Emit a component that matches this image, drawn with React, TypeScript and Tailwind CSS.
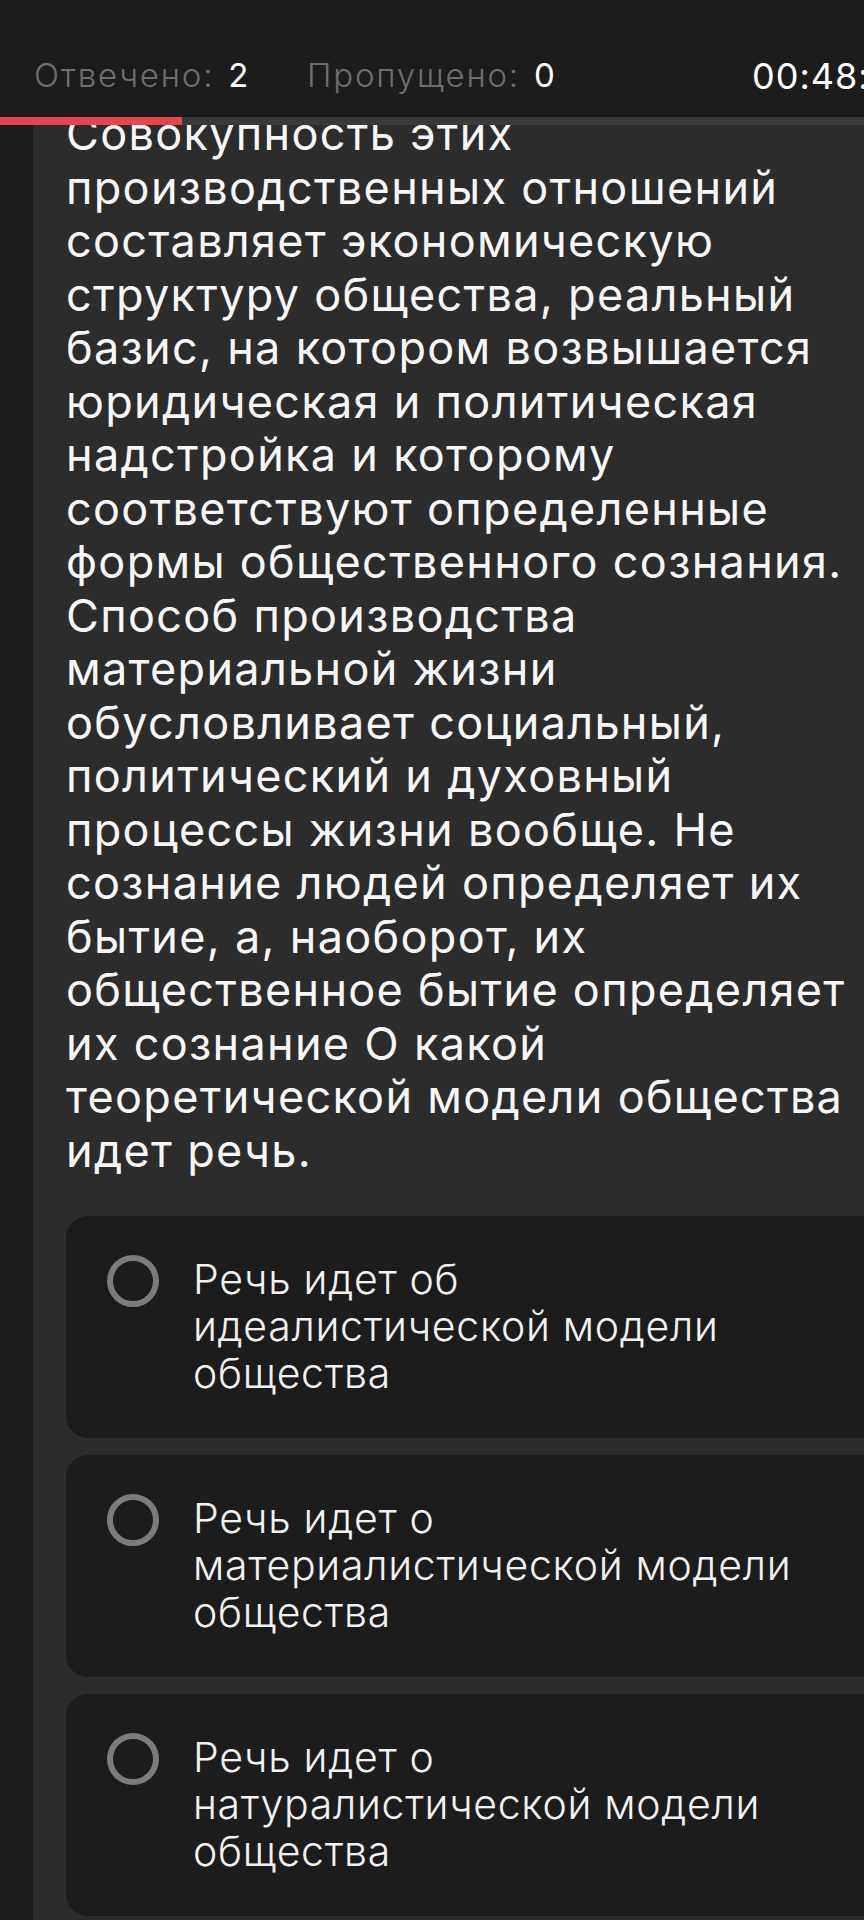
import React from "react";

const questionLines = [
  "Совокупность этих",
  "производственных отношений",
  "составляет экономическую",
  "структуру общества, реальный",
  "базис, на котором возвышается",
  "юридическая и политическая",
  "надстройка и которому",
  "соответствуют определенные",
  "формы общественного сознания.",
  "Способ производства",
  "материальной жизни",
  "обусловливает социальный,",
  "политический и духовный",
  "процессы жизни вообще. Не",
  "сознание людей определяет их",
  "бытие, а, наоборот, их",
  "общественное бытие определяет",
  "их сознание О какой",
  "теоретической модели общества",
  "идет речь.",
];

const answers = [
  ["Речь идет об", "идеалистической модели", "общества"],
  ["Речь идет о", "материалистической модели", "общества"],
  ["Речь идет о", "натуралистической модели", "общества"],
];

function Radio() {
  return (
    <span className="mt-[39px] block size-[52px] shrink-0 rounded-full border-[6px] border-[#7c7c7c]" />
  );
}

export default function App() {
  return (
    <div
      className="flex h-[1920px] w-[864px] flex-col overflow-hidden bg-[#1c1c1c] text-white"
      style={{ fontFamily: "Inter, 'Noto Sans', sans-serif" }}
    >
      {/* шапка со счётчиками */}
      <div className="flex h-[117px] shrink-0 items-center overflow-hidden whitespace-nowrap pl-[34px] pt-[34px]">
        <div className="flex w-[273px] shrink-0 items-baseline gap-[14px] text-[33px] tracking-[1.8px]">
          <span className="font-light text-[#6e6e6e]">Отвечено:</span>
          <span className="text-white">2</span>
        </div>
        <div className="flex w-[445px] shrink-0 items-baseline gap-[14px] text-[33px] tracking-[1.8px]">
          <span className="font-light text-[#6e6e6e]">Пропущено:</span>
          <span className="text-white">0</span>
        </div>
        <span className="shrink-0 text-[36px] tracking-[1px] text-white">00:48:55</span>
      </div>

      {/* прогресс */}
      <div className="h-[8px] shrink-0 bg-[#3a3a3a]">
        <div className="h-full w-[182px] bg-[#ea434b]" />
      </div>

      <div className="flex min-h-0 flex-1 overflow-hidden pl-[33px]">
        <div className="w-[900px] shrink-0 bg-[#2c2c2c] pl-[33px]">
          <div className="-mt-[18px] whitespace-nowrap text-[45px] leading-[53.5px] tracking-[1.3px] text-[#f7f7f7]">
            {questionLines.map((line, i) => (
              <div key={i}>{line}</div>
            ))}
          </div>

          <div className="mt-[39px] flex flex-col gap-[17px]">
            {answers.map((lines, i) => (
              <div
                key={i}
                className="flex h-[222px] gap-[34px] rounded-[22px] bg-[#1c1c1c] pl-[41px]"
              >
                <Radio />
                <div className="mt-[40px] whitespace-nowrap text-[41px] font-light leading-[47px] tracking-[0.7px] text-[#f2f2f2]">
                  {lines.map((l, j) => (
                    <div key={j}>{l}</div>
                  ))}
                </div>
              </div>
            ))}
          </div>
        </div>
      </div>
    </div>
  );
}
